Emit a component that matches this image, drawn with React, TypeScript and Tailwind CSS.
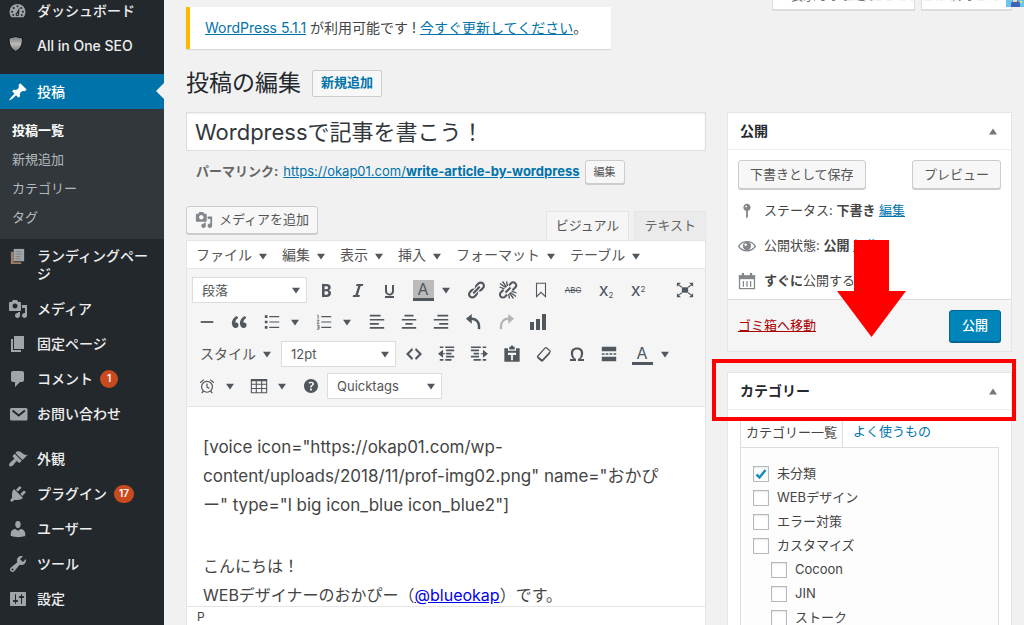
import React from 'react';
import clsx from 'clsx';

// 20x20 admin glyphs
const GLYPHS = {
  pin: 'M10.44 3.02l1.82-1.82 6.36 6.35-1.83 1.82c-1.05-.68-2.48-.57-3.41.36l-.75.75c-.92.93-1.04 2.35-.35 3.41l-1.83 1.82-2.41-2.41-2.8 2.79c-.42.42-3.38 2.71-3.8 2.29s1.86-3.39 2.28-3.81l2.79-2.79L4.1 9.36l1.83-1.82c1.05.69 2.48.57 3.4-.36l.75-.75c.93-.92 1.05-2.35.36-3.41z',
  media: 'M13 11V4c0-.55-.45-1-1-1h-1.67L9 1H5L3.67 3H2c-.55 0-1 .45-1 1v7c0 .55.45 1 1 1h10c.55 0 1-.45 1-1zM7 4.5c1.38 0 2.5 1.12 2.5 2.5S8.38 9.5 7 9.5 4.5 8.38 4.5 7 5.62 4.5 7 4.5zM14 6h5v10.5c0 1.38-1.12 2.5-2.5 2.5S14 17.88 14 16.5s1.12-2.5 2.5-2.5c.17 0 .34.02.5.05V9h-3V6zm-4 8.05V13h2v3.5c0 1.38-1.12 2.5-2.5 2.5S7 17.88 7 16.5 8.12 14 9.5 14c.17 0 .34.02.5.05z',
  page: 'M6 15V2h10v13H6zm-1 1h8v2H3V5h2v11z',
  comment: 'M5 2h9c1.1 0 2 .9 2 2v7c0 1.1-.9 2-2 2h-2l-5 5v-5H5c-1.1 0-2-.9-2-2V4c0-1.1.9-2 2-2z',
  brush: 'M14.48 11.06L7.41 3.99l1.5-1.5c.5-.56 2.3-.47 3.51.32 1.21.8 1.43 1.28 2.91 2.1 1.18.64 2.45 1.26 4.45.85zm-.71.71L6.7 4.7 4.93 6.47c-.39.39-.39 1.02 0 1.41l1.06 1.06c.39.39.39 1.03 0 1.42-.6.6-1.43 1.11-2.21 1.69-.35.26-.7.53-1.01.84C1.43 14.23.4 16.08 1.4 17.07c.99 1 2.84-.03 4.18-1.36.31-.31.58-.66.85-1.02.57-.78 1.08-1.61 1.69-2.21.39-.39 1.02-.39 1.41 0l1.06 1.06c.39.39 1.02.39 1.41 0z',
  plug: 'M13.11 4.36L9.87 7.6 8 5.73l3.24-3.24c.35-.34 1.05-.2 1.56.32.52.51.66 1.21.31 1.55zm-8 1.77l.91-1.12 9.01 9.01-1.19.84c-.71.71-2.63 1.16-3.82 1.16H6.14L4.9 17.26c-.59.59-1.54.59-2.12 0-.59-.58-.59-1.53 0-2.12l1.24-1.24v-3.88c0-1.13.4-3.19 1.09-3.89zm7.26 3.97l3.24-3.24c.34-.35 1.04-.21 1.55.31.52.51.66 1.21.31 1.55l-3.24 3.25z',
  user: 'M10 9.25c-2.27 0-2.73-3.44-2.73-3.44C7 4.02 7.82 2 9.97 2c2.16 0 2.98 2.02 2.71 3.81 0 0-.41 3.44-2.68 3.44zm0 2.57L12.72 10c2.39 0 4.52 2.33 4.52 4.53v2.49s-3.65 1.13-7.24 1.13c-3.65 0-7.24-1.13-7.24-1.13v-2.49c0-2.25 1.94-4.48 4.47-4.48z',
  wrench: 'M16.68 9.77c-1.34 1.34-3.3 1.67-4.95.99l-5.41 6.52c-.99.99-2.59.99-3.58 0s-.99-2.59 0-3.57l6.52-5.42c-.68-1.65-.35-3.61.99-4.95 1.28-1.28 3.12-1.62 4.72-1.06l-2.89 2.89 2.82 2.82 2.86-2.87c.53 1.58.18 3.39-1.08 4.65zM3.81 16.21c.4.39 1.04.39 1.43 0 .4-.4.4-1.04 0-1.43-.39-.4-1.03-.4-1.43 0-.39.39-.39 1.03 0 1.43z',
  sliders: 'M18 16V4c0-.55-.45-1-1-1H3c-.55 0-1 .45-1 1v12c0 .55.45 1 1 1h14c.55 0 1-.45 1-1zM8 11h1c.55 0 1 .45 1 1s-.45 1-1 1H8v1.5c0 .28-.22.5-.5.5s-.5-.22-.5-.5V13H6c-.55 0-1-.45-1-1s.45-1 1-1h1V5.5c0-.28.22-.5.5-.5s.5.22.5.5V11zm5-2h-1c-.55 0-1-.45-1-1s.45-1 1-1h1V5.5c0-.28.22-.5.5-.5s.5.22.5.5V7h1c.55 0 1 .45 1 1s-.45 1-1 1h-1v5.5c0 .28-.22.5-.5.5s-.5-.22-.5-.5V9z',
  code: 'M9 6l-4 4 4 4-1 2-6-6 6-6zm2 8l4-4-4-4 1-2 6 6-6 6z',
  help: 'M17 10c0-3.87-3.14-7-7-7-3.87 0-7 3.13-7 7s3.13 7 7 7c3.86 0 7-3.13 7-7zm-6.3 1.48H9.14v-.43c0-.38.08-.7.24-.98s.46-.57.88-.89c.41-.29.68-.53.81-.71.14-.18.2-.39.2-.62 0-.25-.09-.44-.28-.58-.19-.13-.45-.19-.79-.19-.58 0-1.25.19-2 .57l-.64-1.28c.87-.49 1.8-.74 2.77-.74.81 0 1.45.2 1.92.58.48.39.71.91.71 1.55 0 .43-.09.8-.29 1.11-.19.32-.57.67-1.11 1.06-.38.28-.61.49-.71.63-.1.15-.15.34-.15.57v.35zm-1.47 2.74c-.18-.17-.27-.42-.27-.73 0-.33.08-.58.26-.75s.43-.25.77-.25c.32 0 .57.09.75.26s.27.42.27.74c0 .3-.09.55-.27.72-.18.18-.43.27-.75.27-.33 0-.58-.09-.76-.26z',
  quote: 'M9.49 13.22c0-.74-.2-1.38-.61-1.9-.62-.78-1.83-.88-2.53-.72-.29-1.65 1.11-3.75 2.92-4.65L7.88 4c-2.73 1.3-5.42 4.28-4.96 8.05C3.21 14.43 4.59 16 6.54 16c.85 0 1.56-.25 2.12-.75s.83-1.18.83-2.03zm8.05 0c0-.74-.2-1.38-.61-1.9-.63-.78-1.83-.88-2.53-.72-.29-1.65 1.11-3.75 2.92-4.65L15.93 4c-2.73 1.3-5.41 4.28-4.95 8.05.29 2.38 1.66 3.95 3.61 3.95.85 0 1.56-.25 2.12-.75s.83-1.18.83-2.03z',
  bold: 'M6 4v13h4.54c1.37 0 2.46-.33 3.26-1 .8-.66 1.2-1.58 1.2-2.77 0-.84-.17-1.51-.51-2.01s-.9-.85-1.67-1.03v-.09c.57-.1 1.02-.4 1.36-.9s.51-1.13.51-1.91c0-1.14-.39-1.98-1.17-2.5C12.75 4.26 11.5 4 9.78 4H6zm2.57 5.15V6.26h1.36c.73 0 1.27.11 1.61.32.34.22.51.58.51 1.07 0 .54-.16.92-.47 1.15s-.82.35-1.51.35h-1.5zm0 2.19h1.6c1.44 0 2.16.53 2.16 1.61 0 .6-.17 1.05-.51 1.34s-.86.43-1.57.43H8.57v-3.38z',
  italic: 'M14.78 6h-2.13l-2.8 9h2.12l-.62 2H4.6l.62-2h2.14l2.8-9H8.03l.62-2h6.75z',
  underline: 'M14 5h-2v5.71c0 1.99-1.12 2.98-2.45 2.98-1.32 0-2.55-1-2.55-2.96V5H5v5.87c0 1.91 1 4.54 4.48 4.54 3.49 0 4.52-2.58 4.52-4.5V5zm0 13v-2H5v2h9z',
  link: 'M17.74 2.76c1.68 1.69 1.68 4.41 0 6.1l-1.53 1.52c-1.12 1.12-2.7 1.47-4.14 1.09l2.62-2.61.76-.77.76-.76c.84-.84.84-2.2 0-3.04-.84-.85-2.2-.85-3.04 0l-.77.76-3.38 3.38c-.37-1.44-.02-3.02 1.1-4.14l1.52-1.53c1.69-1.68 4.42-1.68 6.1 0zM8.59 13.43l5.34-5.34c.42-.42.42-1.1 0-1.52-.44-.43-1.13-.39-1.53 0l-5.33 5.34c-.42.42-.42 1.1 0 1.52.44.43 1.13.39 1.52 0zm-.76 2.29l4.14-4.15c.38 1.44.03 3.02-1.09 4.14l-1.52 1.53c-1.69 1.68-4.41 1.68-6.1 0-1.68-1.68-1.68-4.42 0-6.1l1.53-1.52c1.12-1.12 2.7-1.47 4.14-1.1l-4.14 4.15c-.85.84-.85 2.2 0 3.05.84.84 2.2.84 3.04 0z',
  chart: 'M18 18V2h-4v16h4zm-6 0V7H8v11h4zm-6 0v-8H2v8h4z',
  status: 'M14 6c0 1.86-1.28 3.41-3 3.86V16c0 1-2 2-2 2V9.86c-1.72-.45-3-2-3-3.86 0-2.21 1.79-4 4-4s4 1.79 4 4zM8 5c0 .55.45 1 1 1s1-.45 1-1-.45-1-1-1-1 .45-1 1z',
  omega: 'M10 5.4c1.27 0 2.24.36 2.91 1.08.66.71 1 1.76 1 3.13 0 1.28-.23 2.37-.69 3.27-.47.89-1.27 1.52-2.22 2.12v2h6v-2h-3.69c.92-.64 1.62-1.34 2.12-2.34.49-1.01.74-2.13.74-3.35 0-1.78-.55-3.19-1.65-4.22S11.92 3.54 10 3.54s-3.43.53-4.52 1.57c-1.1 1.04-1.65 2.44-1.65 4.2 0 1.21.24 2.31.73 3.33.48 1.01 1.19 1.71 2.1 2.36H3v2h6v-2c-.98-.64-1.8-1.28-2.24-2.17-.45-.89-.67-1.96-.67-3.22 0-1.37.33-2.41 1-3.13C7.75 5.76 8.72 5.4 10 5.4z',
};

type GlyphName = keyof typeof GLYPHS;

function Glyph({ name, size = 18 }: { name: GlyphName; size?: number }) {
  return (
    <svg width={size} height={size} viewBox="0 0 20 20" fill="currentColor" fillRule="evenodd" aria-hidden="true">
      <path d={GLYPHS[name]} />
    </svg>
  );
}

function Drawn({ children, size = 18 }: { children: React.ReactNode; size?: number }) {
  return (
    <svg width={size} height={size} viewBox="0 0 20 20" fill="none" stroke="currentColor" aria-hidden="true">
      {children}
    </svg>
  );
}

function Caret() {
  return (
    <svg width="8" height="7" viewBox="0 0 9 7" fill="currentColor" className="shrink-0 text-[#50575e]" aria-hidden="true">
      <path d="M0 .5h9L4.500 7z" />
    </svg>
  );
}

const DashboardIcon = () => (
  <Drawn size={19}>
    <path d="M3.700 17a8.400 8.400 0 1 1 12.600 0z" fill="currentColor" stroke="none" />
    <g fill="#23282d" stroke="none">
      <circle cx="10" cy="5.500" r="1.100" />
      <circle cx="6" cy="7.300" r="1.100" />
      <circle cx="4.300" cy="11.300" r="1.100" />
      <circle cx="15.700" cy="11.300" r="1.100" />
      <circle cx="14" cy="7.300" r="1.100" />
      <circle cx="5.500" cy="14.800" r="1" />
      <circle cx="14.500" cy="14.800" r="1" />
      <path d="M12.200 6.500l-.5 6.700a2 2 0 1 1-2.800-.9z" />
    </g>
    <circle cx="10" cy="14" r=".8" fill="currentColor" stroke="none" />
  </Drawn>
);

const ShieldIcon = () => (
  <svg width="20" height="20" viewBox="0 0 20 20" aria-hidden="true">
    <defs>
      <linearGradient id="shield" x1="0" y1="0" x2="0" y2="1">
        <stop offset="0" stopColor="#777" />
        <stop offset=".5" stopColor="#bbb" />
        <stop offset="1" stopColor="#777" />
      </linearGradient>
    </defs>
    <path d="M1 2Q7.500-1 14.500 2C14.500 9 12.500 13 7.700 15.500 3 13 1 9 1 2z" fill="url(#shield)" stroke="#111" />
  </svg>
);

const LandingIcon = () => (
  <svg width="19" height="19" viewBox="0 0 20 20" aria-hidden="true">
    <path d="M3 5h3v11h8v2H3z" fill="#9c7f66" />
    <path d="M6 2h11v13H6z" fill="#a0a5aa" />
    <path d="M8 5h6M8 7.500h7M8 10h5M8 12.500h6" stroke="#87807a" />
  </svg>
);

const MailIcon = () => (
  <Drawn size={20}>
    <rect x="2" y="4" width="17.500" height="12.500" rx="1.500" fill="currentColor" stroke="none" />
    <path d="M4.500 6.500l6.200 5 6.200-5" stroke="#23282d" strokeWidth="2" />
  </Drawn>
);

const before = [
  { label: 'ダッシュボード', icon: <DashboardIcon /> },
  { label: 'All in One SEO', icon: <ShieldIcon /> },
];

const content = [
  { label: 'メディア', icon: <Glyph name="media" size={20} /> },
  { label: '固定ページ', icon: <Glyph name="page" size={20} /> },
  { label: 'コメント', icon: <Glyph name="comment" size={20} />, count: 1 },
  { label: 'お問い合わせ', icon: <MailIcon /> },
];

const admin = [
  { label: '外観', icon: <Glyph name="brush" size={20} /> },
  { label: 'プラグイン', icon: <Glyph name="plug" size={20} />, count: 17 },
  { label: 'ユーザー', icon: <Glyph name="user" size={20} /> },
  { label: 'ツール', icon: <Glyph name="wrench" size={20} /> },
  { label: '設定', icon: <Glyph name="sliders" size={20} /> },
];

function MenuItem({ label, icon, count }: { label: string; icon: React.ReactNode; count?: number }) {
  return (
    <a href="#" className="flex h-[35px] items-center pl-2 text-sm font-medium text-[#eee]">
      <span className="flex w-[29px] shrink-0 text-[#a0a5aa]">{icon}</span>
      {label}
      {count && (
        <span className="ml-[7px] flex h-[18px] min-w-[18px] items-center justify-center rounded-full bg-[#ca4a1f] px-[5px] text-[10px] font-semibold text-white">
          {count}
        </span>
      )}
    </a>
  );
}

function Sidebar() {
  return (
    <nav className="w-[164px] shrink-0 overflow-hidden bg-[#23282d]">
      <div className="-mt-[7px] mb-[11px]">
        {before.map((item) => <MenuItem key={item.label} {...item} />)}
      </div>
      <a href="#" className="relative flex h-[35px] items-center bg-[#0073aa] pl-2 text-sm font-medium text-white">
        <span className="flex w-[29px] shrink-0"><Glyph name="pin" size={20} /></span>
        投稿
        <span className="absolute right-0 top-[9px] border-y-8 border-r-8 border-y-transparent border-r-[#f1f1f1]" />
      </a>
      <div className="bg-[#32373c] py-[7px] text-[13px] text-[#b4b9be]">
        {['投稿一覧', '新規追加', 'カテゴリー', 'タグ'].map((label, i) => (
          <a key={label} href="#" className={clsx('flex h-[29px] items-center pl-3', i === 0 && 'font-bold text-white')}>
            {label}
          </a>
        ))}
      </div>
      <a href="#" className="flex py-2 pl-2 pr-3 text-sm font-medium leading-[18px] text-[#eee]">
        <span className="flex w-[29px] shrink-0"><LandingIcon /></span>
        <span className="break-all">ランディングページ</span>
      </a>
      <div className="mb-[10px]">
        {content.map((item) => <MenuItem key={item.label} {...item} />)}
      </div>
      {admin.map((item) => <MenuItem key={item.label} {...item} />)}
    </nav>
  );
}

// Editor toolbar

function Tool({ label, children, caret, faded }: { label: string; children: React.ReactNode; caret?: boolean; faded?: boolean }) {
  return (
    <div className="flex shrink-0">
      <button type="button" aria-label={label} className={clsx('flex h-7 w-8 items-center justify-center', faded && 'opacity-40')}>
        {children}
      </button>
      {caret && (
        <button type="button" aria-label={`${label} オプション`} className="flex h-7 w-5 items-center pl-[3px]">
          <Caret />
        </button>
      )}
    </div>
  );
}

function ToolSelect({ label, value }: { label: string; value: string }) {
  return (
    <div className="relative shrink-0">
      <select aria-label={label} className="h-[26px] w-[115px] appearance-none border border-[#ddd] bg-white pl-[9px] text-[13px] text-[#555]">
        <option>{value}</option>
      </select>
      <span className="pointer-events-none absolute inset-y-0 right-[7px] flex items-center"><Caret /></span>
    </div>
  );
}

function TextColor({ filled }: { filled?: boolean }) {
  return (
    <span className={clsx('flex w-[21px] justify-center border-b-[3px] border-[#50575e] text-base leading-[18px]', filled && 'bg-[#bbb]')}>
      A
    </span>
  );
}

const Lines = ({ d, extra }: { d: string; extra?: React.ReactNode }) => (
  <Drawn>
    <path d={d} strokeWidth="1.900" />
    {extra}
  </Drawn>
);

const menus = ['ファイル', '編集', '表示', '挿入', 'フォーマット', 'テーブル'];

function Toolbar() {
  return (
    <div className="border-b border-[#e5e5e5] bg-[#f5f5f5] pb-1 pl-1 pt-[5px] text-[#50575e]">
      <div className="flex h-8 items-center gap-px pl-px">
        <div className="mr-0.5"><ToolSelect label="段落" value="段落" /></div>
        <div className="flex">
          <Tool label="太字"><Glyph name="bold" size={20} /></Tool>
          <Tool label="イタリック"><Glyph name="italic" size={20} /></Tool>
          <Tool label="下線"><Glyph name="underline" size={20} /></Tool>
        </div>
        <Tool label="背景色" caret><TextColor filled /></Tool>
        <div className="flex">
          <Tool label="リンク"><Glyph name="link" size={20} /></Tool>
          <Tool label="リンク解除">
            <Drawn size={20}>
              <g strokeWidth="2">
                <path d="M11 5.500l2-2.200a2.900 2.900 0 0 1 4.200 4.200l-2.700 2.700M9 14.500l-2 2.200a2.900 2.900 0 0 1-4.200-4.200l2.700-2.700" />
                <path d="M7.500 12.500l5-5" />
              </g>
              <path d="M2 3.500l5.500 4M4.500 1.500l4 5.500M8.500 1.500l1 4.500M1.500 7l5 1.800M18 16.500l-5.500-4M15.500 18.500l-4-5.500M11.500 18.500l-1-4.500M18.500 13l-5-1.800" strokeWidth="1.300" />
            </Drawn>
          </Tool>
        </div>
        <div className="flex">
          <Tool label="アンカー"><Drawn><path d="M5 2.500h10v15l-5-5-5 5z" strokeWidth="1.200" /></Drawn></Tool>
          <Tool label="打ち消し"><span className="text-[8px] line-through">ABC</span></Tool>
        </div>
        <div className="flex">
          <Tool label="下付き"><span className="text-lg leading-none">x<sub className="text-[8px]">2</sub></span></Tool>
          <Tool label="上付き"><span className="text-lg leading-none">x<sup className="text-[8px]">2</sup></span></Tool>
        </div>
        <div className="ml-auto mr-1">
          <Tool label="全画面">
            <Drawn>
              <path d="M6.500 7h7v6h-7z" fill="currentColor" stroke="none" />
              <path d="M2.500 4l4 3M17.500 4l-4 3M2.500 16l4-3M17.500 16l-4-3" strokeWidth="1.200" />
              <path d="M1 2h4.500L1 6.500zM19 2h-4.500L19 6.500zM1 18h4.500L1 13.500zM19 18h-4.500l4.500-4.500z" fill="currentColor" stroke="none" />
            </Drawn>
          </Tool>
        </div>
      </div>

      <div className="flex h-8 items-center gap-px">
        <div className="flex">
          <Tool label="水平線"><Drawn><path d="M3 10h14" strokeWidth="2" /></Drawn></Tool>
          <Tool label="引用"><Glyph name="quote" size={20} /></Tool>
        </div>
        <div className="flex">
          <Tool label="箇条書き" caret>
            <Drawn>
              <path d="M7 4h11M7 10h11M7 16h11" strokeWidth="1.200" />
              <path d="M2 4h3M2 10h3M2 16h3" strokeWidth="3" />
            </Drawn>
          </Tool>
          <Tool label="番号付き" caret>
            <Drawn>
              <path d="M7 4h11M7 10h11M7 16h11" strokeWidth="1.200" />
              <path d="M2.500 2.500h1v4M2 8h2.500l-2 3.500h2.500M2 13.500h2.500v4.500h-2.500M2.500 15.700h2" strokeWidth=".9" />
            </Drawn>
          </Tool>
        </div>
        <div className="flex">
          <Tool label="左寄せ"><Lines d="M2 3h12M2 7.500h16M2 12h10M2 16.500h16" /></Tool>
          <Tool label="中央寄せ"><Lines d="M5 3h10M2 7.500h16M6 12h8M2 16.500h16" /></Tool>
          <Tool label="右寄せ"><Lines d="M6 3h12M2 7.500h16M8 12h10M2 16.500h16" /></Tool>
        </div>
        <div className="flex">
          <Tool label="取り消し">
            <Drawn>
              <path d="M5 6.500c7-1 11.500 3 10.500 11.500" strokeWidth="2.800" />
              <path d="M7.500 1v11L1 6.500z" fill="currentColor" stroke="none" />
            </Drawn>
          </Tool>
          <Tool label="やり直し" faded>
            <Drawn>
              <path d="M15 6.500c-7-1-11.500 3-10.500 11.500" strokeWidth="2.500" />
              <path d="M12.500 1v11L19 6.500z" fill="currentColor" stroke="none" />
            </Drawn>
          </Tool>
          <Tool label="グラフ"><Glyph name="chart" size={20} /></Tool>
        </div>
      </div>

      <div className="flex h-8 items-center gap-px pl-px">
        <button type="button" className="mr-[9px] flex items-center gap-[7px] pl-2 text-sm text-[#555]">
          スタイル <Caret />
        </button>
        <div className="mr-px"><ToolSelect label="フォントサイズ" value="12pt" /></div>
        <div className="flex">
          <Tool label="コード"><Glyph name="code" size={20} /></Tool>
        </div>
        <div className="flex">
          <Tool label="インデント解除">
            <Lines
              d="M2 2.500h4M8 2.500h10M9 6h9M9 9.500h6M9 13h9M2 16.500h4M8 16.500h7"
              extra={<path d="M5 6.500v6.500L1 9.700zM4 9.700h4" fill="currentColor" strokeWidth="1.200" />}
            />
          </Tool>
          <Tool label="インデント">
            <Lines
              d="M1 2.500h11M14 2.500h4M1 6h9M4 9.500h6M1 13h9M4 16.500h8M14 16.500h4"
              extra={<path d="M15 6.500v6.500L19 9.700zM12 9.700h4" fill="currentColor" strokeWidth="1.200" />}
            />
          </Tool>
        </div>
        <div className="flex">
          <Tool label="テキストとして貼り付け">
            <Drawn>
              <path fillRule="evenodd" d="M7 2h1.500a1.500 1.500 0 0 1 3 0H13v3H7zM1.500 3.500H5.500V6.500h9V3.500h4V18.500h-17zM5.500 8.500v2.500h3.500v6h2v-6h3.500V8.500z" fill="currentColor" stroke="none" />
            </Drawn>
          </Tool>
          <Tool label="書式クリア">
            <Drawn>
              <path d="M3 12.500L11 3.500q1-1 2-.2l3.500 3q.8.9 0 1.800L8.500 16.500q-1 1-2 .2L3.200 14q-.8-.7-.2-1.500z" strokeWidth="1.400" />
              <path d="M3 12.500l5.500 4 8-8.500v2L8 19l-5-4z" fill="currentColor" stroke="none" />
            </Drawn>
          </Tool>
        </div>
        <div className="flex">
          <Tool label="特殊文字"><Glyph name="omega" size={20} /></Tool>
          <Tool label="続きを読む">
            <Drawn>
              <path d="M2 2h16v5H2zM2 13h16v5H2z" fill="currentColor" stroke="none" />
              <path d="M2 10h3M6.300 10h3M10.600 10h3M15 10h3" strokeWidth="1.600" />
            </Drawn>
          </Tool>
        </div>
        <Tool label="文字色" caret><TextColor /></Tool>
      </div>

      <div className="flex h-8 items-center">
        <Tool label="日時" caret>
          <Drawn size={16}>
            <circle cx="10" cy="11" r="6.800" strokeWidth="1.500" />
            <path d="M10 7v4.500l3 1.500M1.500 6l4.500-4M18.500 6L14 2M5.500 16l-2 3M14.500 16l2 3" strokeWidth="1.500" />
          </Drawn>
        </Tool>
        <Tool label="テーブル" caret>
          <Drawn>
            <path d="M1.500 3.500h17v14h-17zM1.500 8h17M1.500 12.700h17M7 3.500v14M13 3.500v14" strokeWidth="1.200" />
            <path d="M1 3.500h18" strokeWidth="2.500" />
          </Drawn>
        </Tool>
        <Tool label="ヘルプ"><Glyph name="help" size={20} /></Tool>
        <ToolSelect label="Quicktags" value="Quicktags" />
      </div>
    </div>
  );
}

const graySmall = 'rounded-[3px] border border-[#ccc] bg-[#f7f7f7] text-[#555] shadow-[0_1px_0_#ccc]';

function Editor() {
  return (
    <section className="flex min-h-0 flex-1 flex-col">
      <div className="flex items-end justify-between">
        <button type="button" className={clsx(graySmall, 'mb-[6px] flex h-7 items-center gap-1.5 px-2 text-[13px]')}>
          <span className="text-[#82878c]"><Glyph name="media" /></span>
          メディアを追加
        </button>
        <div className="flex gap-[5px] text-[13px] text-[#555]">
          <button type="button" className="h-[29px] border border-b-0 border-[#e5e5e5] bg-[#f5f5f5] px-[9px]">ビジュアル</button>
          <button type="button" className="h-[29px] border border-b-0 border-[#e5e5e5] bg-[#ebebeb] px-[9px] text-[#666]">テキスト</button>
        </div>
      </div>
      <div className="flex min-h-0 flex-1 flex-col border border-b-0 border-[#e5e5e5] bg-white">
        <div className="flex h-[28px] shrink-0 items-center gap-[15px] border-b border-[#e5e5e5] pl-[9px] text-sm text-[#555]">
          {menus.map((label) => (
            <button key={label} type="button" className="flex items-center gap-[7px]">
              {label} <span className="pt-1"><Caret /></span>
            </button>
          ))}
        </div>
        <Toolbar />
        <div className="min-h-0 flex-1 overflow-hidden pl-4 pr-2 pt-[26px] text-base leading-[29px] text-[#444]">
          <p className="mb-8 break-words text-[17px] leading-[29px]">
            [voice icon="https://okap01.com/wp-<br />
            content/uploads/2018/11/prof-img02.png" name="おかぴ<br />
            ー" type="l big icon_blue icon_blue2"]
          </p>
          <p>
            こんにちは！<br />
            WEBデザイナーのおかぴー（<a href="#" className="text-[#0000ee] underline">@blueokap</a>）です。
          </p>
        </div>
        <div className="h-[19px] shrink-0 border-t border-[#e5e5e5] pl-[10px] text-xs leading-5 text-[#444]">P</div>
      </div>
    </section>
  );
}

function BoxHeader({ title }: { title: string }) {
  return (
    <div className="flex h-[37px] items-center justify-between border-b border-[#eee] pl-3 pr-3.5">
      <h2 className="text-sm font-bold text-[#23282d]">{title}</h2>
      <button type="button" aria-label={`${title}パネルを閉じる`} className="text-[#72777c]">
        <svg width="8" height="7" viewBox="0 0 9 7" fill="currentColor" aria-hidden="true"><path d="M0 7h9L4.500 0z" /></svg>
      </button>
    </div>
  );
}

function PublishBox() {
  return (
    <section className="border border-[#e5e5e5] bg-white text-[13px] text-[#444]">
      <BoxHeader title="公開" />
      <div className="flex justify-between px-[10px] pt-[10px]">
        <button type="button" className={clsx(graySmall, 'h-[29px] px-[11px]')}>下書きとして保存</button>
        <button type="button" className={clsx(graySmall, 'h-[29px] px-[11px]')}>プレビュー</button>
      </div>
      <ul className="pb-px pl-[10px] pt-1">
        <li className="flex h-[35px] items-center">
          <span className="w-[26px] text-[#82878c]"><Glyph name="status" /></span>
          ステータス:&nbsp;<b>下書き</b>&nbsp;<a href="#" className="text-[#0073aa] underline">編集</a>
        </li>
        <li className="flex h-[35px] items-center">
          <span className="w-[26px] text-[#82878c]">
            <Drawn>
              <path d="M.7 10.500C5 3.500 15 3.500 19.300 10.500 15 17 5 17 .7 10.500z" strokeWidth="1.400" />
              <circle cx="10" cy="10" r="4.600" fill="currentColor" stroke="none" />
              <circle cx="8.500" cy="8.500" r="1.400" fill="#fff" stroke="none" />
            </Drawn>
          </span>
          公開状態:&nbsp;<b>公開</b>&nbsp;<a href="#" className="text-[#0073aa] underline">編集</a>
        </li>
        <li className="flex h-[35px] items-center">
          <span className="w-[26px] text-[#82878c]">
            <Drawn>
              <path d="M1 3.500h18V8H1z" fill="currentColor" stroke="none" />
              <path d="M1.700 3.500v15h16.600v-15M6 10v6.500M10 10v6.500M14 10v6.500" strokeWidth="1.400" />
              <path d="M5.500 1v4M14.500 1v4" strokeWidth="2.500" />
            </Drawn>
          </span>
          <b>すぐに</b>公開する
        </li>
      </ul>
      <div className="flex h-[52px] items-center justify-between border-t border-[#ddd] bg-[#f5f5f5] px-[10px]">
        <a href="#" className="text-[#a00] underline">ゴミ箱へ移動</a>
        <button type="button" className="h-8 rounded-[3px] border border-[#006799] bg-[#0085ba] px-3 font-medium text-white shadow-[0_1px_0_#006799]">公開</button>
      </div>
    </section>
  );
}

const categories = [
  { label: '未分類', checked: true },
  { label: 'WEBデザイン' },
  { label: 'エラー対策' },
  { label: 'カスタマイズ' },
  { label: 'Cocoon', child: true },
  { label: 'JIN', child: true },
  { label: 'ストーク', child: true },
];

function CategoryBox() {
  return (
    <section className="relative mt-5 border border-[#e5e5e5] bg-white text-[13px] text-[#444]">
      <BoxHeader title="カテゴリー" />
      <div className="px-3 pt-[7px]">
        <div className="flex">
          <a href="#" className="-mb-px flex h-[30px] items-center border border-b-0 border-[#ddd] bg-[#fdfdfd] px-[5px]">カテゴリー一覧</a>
          <a href="#" className="flex h-[30px] items-center px-[10px] text-[#0073aa]">よく使うもの</a>
        </div>
        <ul className="border border-[#ddd] bg-[#fdfdfd] px-3 pt-[14px]">
          {categories.map(({ label, checked, child }) => (
            <li key={label} className={clsx('h-6', child && 'pl-[18px]')}>
              <label className="flex h-6 items-center gap-2">
                <span className="relative flex">
                  <input type="checkbox" defaultChecked={checked} className="peer size-4 appearance-none border border-[#b4b9be] bg-white shadow-[inset_0_1px_2px_#0000001a]" />
                  <svg className="pointer-events-none absolute inset-0 hidden size-4 peer-checked:block" viewBox="0 0 16 16" fill="none" stroke="#1e8cbe" strokeWidth="2.500" aria-hidden="true">
                    <path d="M3.500 8.500l3 3L12.500 4" />
                  </svg>
                </span>
                {label}
              </label>
            </li>
          ))}
        </ul>
      </div>
      {/* highlight frame round the box title */}
      <div className="pointer-events-none absolute -left-4 -right-[5px] -top-[14px] h-[62px] border-4 border-[#f00]" />
    </section>
  );
}

function ScreenLinks() {
  const tab = 'flex h-7 items-center gap-2 border border-t-0 border-[#ddd] bg-white px-[17px] text-[13px] text-[#72777c] shadow-[0_1px_0_#ddd]';
  return (
    <div className="absolute -top-[18px] right-3 flex gap-1.5">
      <button type="button" className={tab}>表示オプション <Caret /></button>
      <button type="button" className={tab}>ヘルプ <Caret /></button>
      <span className="pointer-events-none absolute right-3 top-1 text-[13px] text-[#eee]">こんにちは、おかぴーさん</span>
    </div>
  );
}

export default function App() {
  return (
    <div lang="ja" className="flex h-screen w-full overflow-hidden bg-[#f1f1f1]" style={{ fontFamily: 'Inter, "Noto Sans CJK JP", sans-serif' }}>
      <Sidebar />
      <main className="relative flex min-w-0 flex-1 flex-col pl-[22px] pr-3 pt-[7px]">
        <ScreenLinks />
        <svg className="absolute right-0 top-0" width="18" height="7" viewBox="0 0 18 7" aria-hidden="true">
          <path d="M0 0h18v7H0z" fill="#6cc5ee" />
          <path d="M5 7V3l3-3h3l3 3v4z" fill="#3f62b5" />
          <path d="M7 0h4v2H7z" fill="#f3d3b0" />
          <path d="M14 1h2v2h-2z" fill="#f6dc4a" />
        </svg>

        <div className="flex h-[42px] w-fit shrink-0 items-center border-l-4 border-[#ffb900] bg-white pl-[15px] pr-6 text-sm text-[#444] shadow-[0_1px_1px_#0000001a]">
          <p>
            <a href="#" className="text-[#0073aa] underline">WordPress 5.1.1</a> が利用可能です ! <a href="#" className="text-[#0073aa] underline">今すぐ更新してください</a>。
          </p>
        </div>

        <div className="mt-[17px] flex h-[34px] shrink-0 items-center gap-[11px]">
          <h1 className="text-[23px] leading-[34px] text-[#23282d]">投稿の編集</h1>
          <a href="#" className="flex h-[27px] items-center rounded-[2px] border border-[#ccc] bg-[#f7f7f7] px-2 text-[13px] font-bold text-[#0073aa]">新規追加</a>
        </div>

        <div className="mt-3 flex min-h-0 flex-1 gap-[21px]">
          <div className="flex min-w-0 flex-1 flex-col">
            <input
              type="text"
              aria-label="タイトル"
              defaultValue="Wordpressで記事を書こう！"
              className="h-[39px] w-full shrink-0 border border-[#ddd] bg-white px-2 pb-1 text-[22px] text-[#32373c] shadow-[inset_0_1px_2px_#00000012]"
            />
            <div className="mb-[21px] mt-2 flex h-[26px] shrink-0 items-center gap-[5px] pl-[10px] text-[13px] text-[#666]">
              <b>パーマリンク:</b>
              <a href="#" className="text-[#0073aa] underline">https://okap01.com/<b>write-article-by-wordpress</b></a>
              <button type="button" className={clsx(graySmall, 'h-6 px-2 text-[11px]')}>編集</button>
            </div>
            <Editor />
          </div>

          <aside className="relative w-[285px] shrink-0">
            <PublishBox />
            <CategoryBox />
            {/* arrow pointing at the category box */}
            <svg className="pointer-events-none absolute left-[110px] top-32" width="69" height="97" viewBox="0 0 69 97" fill="#f00" aria-hidden="true">
              <path d="M17 0h35v51h17L34.500 97 0 51h17z" />
            </svg>
          </aside>
        </div>
      </main>
    </div>
  );
}
